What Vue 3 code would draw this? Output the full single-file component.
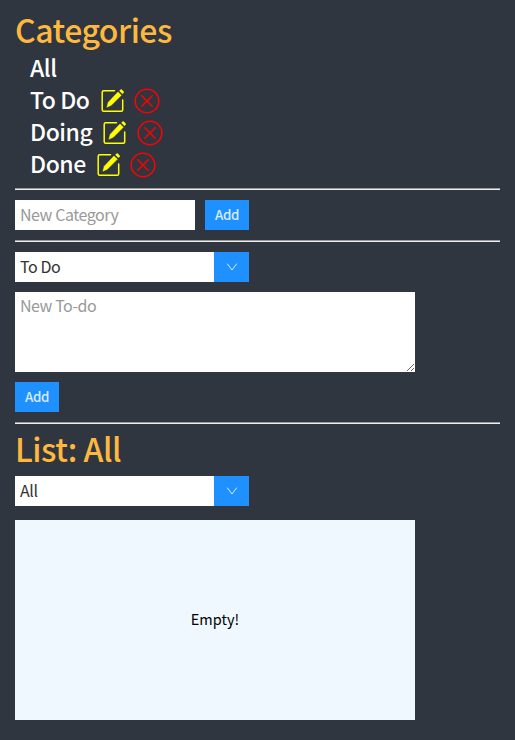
<script setup>
import { ref } from 'vue'

const categories = ref([
  { name: 'All', fixed: true },
  { name: 'To Do' },
  { name: 'Doing' },
  { name: 'Done' },
])
</script>

<template>
  <main class="app">
    <h1 class="title">Categories</h1>
    <ul class="categories">
      <li v-for="c in categories" :key="c.name" class="category">
        <span class="name">{{ c.name }}</span>
        <template v-if="!c.fixed">
          <svg class="icon edit" viewBox="0 0 26 26">
            <path d="M14.5 2.7H3.7Q2.2 2.7 2.2 4.2V21.8Q2.2 23.3 3.7 23.3H21.2Q22.7 23.3 22.7 21.8V12" fill="none" stroke="currentColor" stroke-width="1.5" stroke-linecap="round" />
            <path d="M18 3.9L21.3 7.2L11.3 17.2L6.9 19.2L8.3 14.2Z" fill="currentColor" stroke="currentColor" stroke-width=".5" stroke-linejoin="round" />
            <path d="M19.2 2.8L20.6 1.5Q21.2 1 21.8 1.6L23.7 3.5Q24.3 4.1 23.7 4.7L22.4 6Z" fill="currentColor" />
          </svg>
          <svg class="icon remove" viewBox="0 0 26 26">
            <circle cx="13" cy="13" r="11.8" />
            <path d="M7.8 7.8L18.2 18.2M18.2 7.8L7.8 18.2" />
          </svg>
        </template>
      </li>
    </ul>
    <hr class="rule" />
    <form class="row" @submit.prevent>
      <input class="field" type="text" placeholder="New Category" />
      <button class="button">Add</button>
    </form>
    <hr class="rule" />
    <form class="stack" @submit.prevent>
      <div class="select">
        <span class="value">To Do</span>
        <span class="arrow"><svg viewBox="0 0 12 10"><path d="M1.2 1.6L6 8L10.8 1.6" /></svg></span>
      </div>
      <textarea class="area" placeholder="New To-do"></textarea>
      <button class="button">Add</button>
    </form>
    <hr class="rule list-rule" />
    <h1 class="title list-title">List: All</h1>
    <div class="select">
      <span class="value">All</span>
      <span class="arrow"><svg viewBox="0 0 12 10"><path d="M1.2 1.6L6 8L10.8 1.6" /></svg></span>
    </div>
    <section class="list">Empty!</section>
  </main>
</template>

<style>
body {
  background: #2f363f;
}
</style>

<style scoped>
.app,
.app * {
  box-sizing: border-box;
}
.app {
  min-height: 740px;
  padding: 8px 15px 20px;
  background: #2f363f;
  font-family: "Noto Sans CJK JP", "Noto Sans", sans-serif;
}
.title {
  margin: 0;
  height: 45px;
  line-height: 42px;
  font-size: 32px;
  font-weight: 500;
  letter-spacing: -0.5px;
  color: #ffb83f;
}
.list-title {
  height: 49px;
}
.categories {
  margin: 0;
  padding: 0 0 0 15px;
  list-style: none;
}
.category {
  display: flex;
  align-items: center;
  height: 32px;
  color: #fff;
  font-size: 23px;
  font-weight: 500;
  letter-spacing: -0.45px;
}
.name {
  height: 32px;
  line-height: 29px;
}
.icon {
  width: 26px;
  height: 26px;
  flex: none;
}
.edit {
  margin-left: 10px;
  color: #ff0;
}
.remove {
  margin-left: 8.5px;
  fill: none;
  stroke: #f00;
  stroke-width: 1.5;
  stroke-linecap: round;
}
.rule {
  height: 2px;
  margin: 10px 0;
  border: 0;
  border-top: 1px solid #9a9a9a;
  border-bottom: 1px solid #eee;
}
.categories + .rule {
  margin-top: 7px;
}
.list-rule {
  margin-bottom: 3px;
}
.row {
  display: flex;
  gap: 10px;
}
.stack {
  display: flex;
  flex-direction: column;
  align-items: flex-start;
  gap: 10px;
}
.field,
.area {
  border: 0;
  outline: 0;
  padding: 0 5px;
  background: #fff;
  font-family: inherit;
  font-size: 16px;
  letter-spacing: -0.45px;
}
.field {
  width: 180px;
  height: 30px;
  padding-bottom: 2px;
}
.area {
  width: 400px;
  height: 80px;
  padding-top: 1px;
  line-height: 24px;
  resize: both;
}
.field::placeholder,
.area::placeholder {
  color: #999;
}
.button {
  width: 44px;
  height: 30px;
  padding: 0 0 1px;
  border: 0;
  background: #1e90ff;
  color: #d9ebfc;
  font-family: inherit;
  font-size: 13.333px;
  font-weight: 500;
  letter-spacing: -0.3px;
}
.select {
  display: flex;
  width: 234px;
  height: 30px;
  background: #fff;
}
.value {
  flex: 1;
  padding-left: 5px;
  font-size: 16px;
  line-height: 28px;
  letter-spacing: -0.4px;
  color: #333;
}
.arrow {
  display: flex;
  align-items: center;
  justify-content: center;
  width: 35px;
  background: #1e90ff;
}
.arrow svg {
  width: 12px;
  height: 10px;
  fill: none;
  stroke: #d9ebfc;
  stroke-width: 1;
}
.list {
  display: flex;
  align-items: center;
  justify-content: center;
  width: 400px;
  height: 200px;
  margin-top: 14px;
  padding-bottom: 4px;
  background: #f0f8ff;
  color: #000;
  font-size: 14.5px;
}
</style>
